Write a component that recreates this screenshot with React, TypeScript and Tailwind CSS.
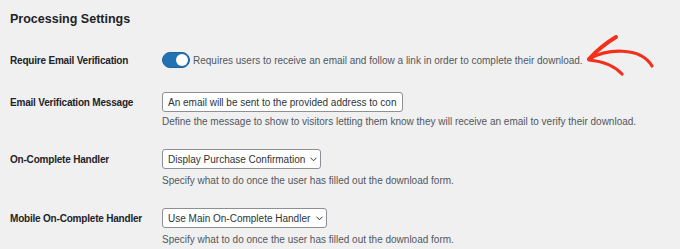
import React from 'react';

const labelCls = 'w-[152px] shrink-0 flex items-center text-[10px] font-bold tracking-[-0.2px] text-[#1d2327]';
const descCls = 'text-[10px] leading-[14px] text-[#50575e]';

function Chevron() {
  return (
    <svg width="7" height="5" viewBox="0 0 7 5" fill="none" className="shrink-0">
      <path d="M0.75 1l2.75 2.75L6.25 1" stroke="#2c3338" strokeWidth="1" strokeLinecap="round" strokeLinejoin="round" />
    </svg>
  );
}

function Select({ value, width }: { value: string; width: string }) {
  return (
    <div
      className={`${width} h-[20px] flex items-center justify-between pl-[5px] pr-[3px] bg-white border border-[#8c8f94] rounded-[3px] text-[10px] text-[#2c3338]`}
    >
      <span className="whitespace-nowrap">{value}</span>
      <Chevron />
    </div>
  );
}

export default function App() {
  return (
    <div
      className="relative w-[680px] h-[249px] overflow-hidden bg-[#f0f0f1] pl-[10px] pt-[11px]"
      style={{ fontFamily: '"Liberation Sans", Arial, sans-serif' }}
    >
      <h2 className="text-[12.5px] leading-[16px] font-bold text-[#1d2327]">Processing Settings</h2>

      {/* Require Email Verification */}
      <div className="flex mt-[25px] h-[16px]">
        <div className={labelCls}>Require Email Verification</div>
        <div className="flex items-center gap-[3px]">
          <div className="w-[28px] h-[16px] rounded-full bg-[#2271b1] border border-[#1c64a0] flex items-center justify-end pr-[1px]">
            <div className="w-[12px] h-[12px] rounded-full bg-white" />
          </div>
          <span className="text-[10px] text-[#50575e] whitespace-nowrap">
            Requires users to receive an email and follow a link in order to complete their download.
          </span>
        </div>
      </div>

      {/* Email Verification Message */}
      <div className="flex mt-[24px]">
        <div className={`${labelCls} h-[20px]`}>Email Verification Message</div>
        <div className="flex flex-col">
          <div className="w-[241px] h-[20px] flex items-center px-[5px] bg-white border border-[#8c8f94] rounded-[3px] overflow-hidden">
            <span className="text-[10px] text-[#2c3338] whitespace-nowrap">
              An email will be sent to the provided address to con
            </span>
          </div>
          <p className={`${descCls} mt-[3px] whitespace-nowrap`}>
            Define the message to show to visitors letting them know they will receive an email to verify their download.
          </p>
        </div>
      </div>

      {/* On-Complete Handler */}
      <div className="flex mt-[20px]">
        <div className={`${labelCls} h-[20px]`}>On-Complete Handler</div>
        <div className="flex flex-col">
          <Select value="Display Purchase Confirmation" width="w-[159px]" />
          <p className={`${descCls} mt-[5px] whitespace-nowrap`}>
            Specify what to do once the user has filled out the download form.
          </p>
        </div>
      </div>

      {/* Mobile On-Complete Handler */}
      <div className="flex mt-[20px]">
        <div className={`${labelCls} h-[20px]`}>Mobile On-Complete Handler</div>
        <div className="flex flex-col">
          <Select value="Use Main On-Complete Handler" width="w-[165px]" />
          <p className={`${descCls} mt-[5px] whitespace-nowrap`}>
            Specify what to do once the user has filled out the download form.
          </p>
        </div>
      </div>

      {/* hand-drawn arrow */}
      <svg
        className="absolute left-0 top-0 pointer-events-none"
        width="680"
        height="249"
        viewBox="0 0 680 249"
        fill="none"
      >
        <g stroke="#f3301c" strokeLinecap="round" strokeLinejoin="round">
          <path d="M589 59 C 606 49 640 46 652 66" strokeWidth="3.2" />
          <path d="M589 59 Q 601 46 616 37" strokeWidth="4" />
          <path d="M589 60 Q 611 62 622 74" strokeWidth="3.2" />
        </g>
      </svg>
    </div>
  );
}
